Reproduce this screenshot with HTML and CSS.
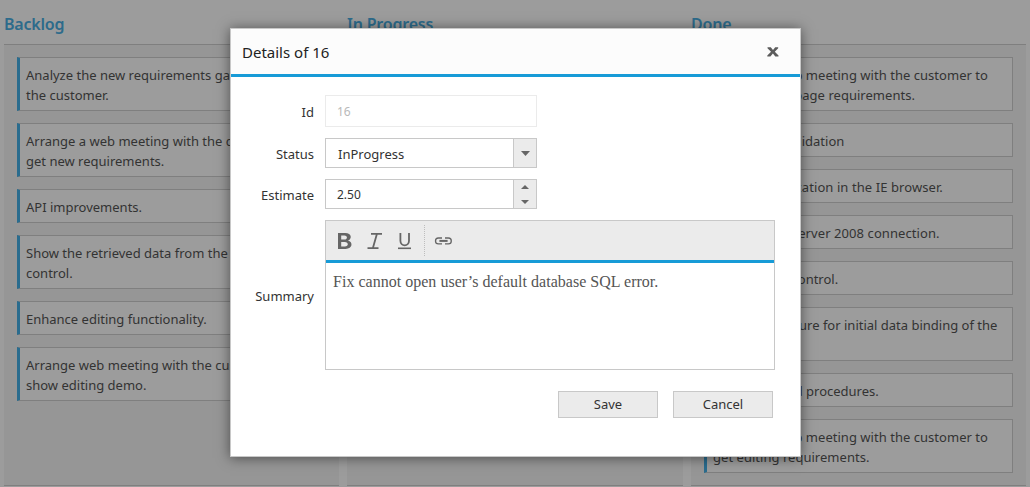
FILE: index.html
```html
<!DOCTYPE html>
<html lang="en">
<head>
<meta charset="utf-8">
<title>Kanban board</title>
<link rel="stylesheet" href="styles.css">
</head>
<body>
<main class="board">
  <section class="column">
    <h2 class="column-title">Backlog</h2>
    <div class="column-body">
      <div class="card">Analyze the new requirements gathered from<br>the customer.</div>
      <div class="card">Arrange a web meeting with the customer to<br>get new requirements.</div>
      <div class="card">API improvements.</div>
      <div class="card">Show the retrieved data from the server in grid<br>control.</div>
      <div class="card">Enhance editing functionality.</div>
      <div class="card">Arrange web meeting with the customer to<br>show editing demo.</div>
    </div>
  </section>
  <section class="column">
    <h2 class="column-title">In Progress</h2>
    <div class="column-body"></div>
  </section>
  <section class="column">
    <h2 class="column-title">Done</h2>
    <div class="column-body">
      <div class="card wide">Arrange a web meeting with the customer to<br>get the login page requirements.</div>
      <div class="card">Login page validation</div>
      <div class="card wider">Test the application in the IE browser.</div>
      <div class="card wider">Analyze SQL server 2008 connection.</div>
      <div class="card">Analyze grid control.</div>
      <div class="card">Stored procedure for initial data binding of the<br>grid.</div>
      <div class="card">Analyze stored procedures.</div>
      <div class="card wide">Arrange a web meeting with the customer to<br>get editing requirements.</div>
    </div>
  </section>
</main>

<div class="dialog" role="dialog">
  <header class="dialog-header">
    <span class="dialog-title">Details of 16</span>
    <svg class="close" width="12" height="10" viewBox="0 0 12 10"><path d="M0.5 0.3H3.8L6 3.1L8.2 0.3H11.2V1.2L7.8 4.7L11.5 8.5V9.5H8.3L5.9 6.6L3.4 9.5H0.3V8.5L4 4.7L0.5 1.2Z" fill="#5c5c5c"/></svg>
  </header>
  <div class="form">
    <label class="label">Id</label>
    <div class="field field-id"><span class="value">16</span></div>
    <label class="label">Status</label>
    <div class="field field-status"><span class="value">InProgress</span>
      <span class="side"><svg width="9" height="5" viewBox="0 0 9 5"><path d="M0 0H9L4.5 5Z" fill="#666"/></svg></span>
    </div>
    <label class="label">Estimate</label>
    <div class="field field-estimate"><span class="value">2.50</span>
      <span class="side spin"><svg width="8" height="4" viewBox="0 0 8 4"><path d="M0 4H8L4 0Z" fill="#666"/></svg><svg width="8" height="4" viewBox="0 0 8 4"><path d="M0 0H8L4 4Z" fill="#666"/></svg></span>
    </div>
    <label class="label">Summary</label>
    <div class="editor">
      <div class="toolbar">
        <svg class="tools" width="125" height="39" viewBox="0 0 125 39">
          <path d="M12 12H19.2C26 12 26.2 18.3 21.9 19.6C27.3 20.8 26.8 28 19.6 28H12ZM15.2 14.4V18.6H18.4C21.8 18.6 21.8 14.4 18.4 14.4ZM15.2 21V25.5H18.8C22.8 25.5 22.8 21 18.8 21Z" fill="#666" fill-rule="evenodd"/>
          <g fill="none" stroke="#666">
            <path d="M45 12.8H56M41.5 27.2H52.5M50.9 13L46.9 27" stroke-width="1.8"/>
            <path d="M74.4 12V19.8C74.4 25.8 83 25.8 83 19.8V12" stroke-width="1.8"/>
            <path d="M72 27.3H85" stroke-width="1.6"/>
            <path d="M98.5 4V36" stroke="#bdbdbd" stroke-dasharray="1 1"/>
            <path d="M116 17H112.4A2.9 2.9 0 0 0 112.4 22.8H116M119 17H122.4A2.9 2.9 0 0 1 122.4 22.8H119" stroke-width="1.3"/>
            <path d="M113.4 19.9H121.6" stroke-width="2"/>
          </g>
        </svg>
      </div>
      <div class="summary">Fix cannot open user’s default database SQL error.</div>
    </div>
  </div>
  <footer class="actions">
    <button class="btn">Save</button>
    <button class="btn">Cancel</button>
  </footer>
</div>
</body>
</html>
```

FILE: styles.css
```css
* { box-sizing: border-box; }
body {
  margin: 0;
  height: 487px;
  overflow: hidden;
  background: #9c9c9c;
  color: #333;
  font: 13px/20px "Noto Sans", "Open Sans", sans-serif;
  white-space: nowrap;
}
.board {
  display: grid;
  grid-template-columns: 335px 336px 335px;
  column-gap: 8px;
  padding-left: 4px;
}
.column-title {
  margin: 0;
  height: 44px;
  padding-top: 14px;
  color: #2d6b8b;
  font-size: 16px;
  font-weight: 600;
  line-height: 20px;
  letter-spacing: -0.2px;
}
.column-body {
  display: flex;
  flex-direction: column;
  gap: 12px;
  height: 442px;
  padding: 12px 13px;
  background: #969696;
  border-top: 1px solid #7f7f7f;
  border-bottom: 1px solid #7f7f7f;
}
.card {
  padding: 7px 0 5px 6px;
  background: #9c9c9c;
  border: 1px solid #7f7f7f;
  border-left: 3px solid #2a6c8e;
}
.wide { letter-spacing: 0.03px; }
.wider { letter-spacing: 0.08px; }
.dialog {
  position: absolute;
  left: 230px;
  top: 28px;
  width: 571px;
  height: 429px;
  background: #fff;
  border: 1px solid #c8c8c8;
  box-shadow: 0 1px 12px rgba(0, 0, 0, .5);
  color: #333;
}
.dialog-header {
  display: flex;
  justify-content: space-between;
  align-items: center;
  height: 48px;
  padding: 0 21px 0 11px;
  background: #fcfcfc;
  border-bottom: 3px solid #179bd7;
}
.dialog-title { font-size: 15px; color: #222; }
.form {
  display: grid;
  grid-template-columns: 83px 450px;
  grid-template-rows: 32px 30px 30px 150px;
  gap: 11px;
  padding: 18px 0 0;
  align-items: center;
}
.label { text-align: right; padding-top: 2px; }
.field {
  display: flex;
  align-items: center;
  justify-content: space-between;
  width: 212px;
  height: 100%;
  padding-left: 12px;
  border: 1px solid #c8c8c8;
}
.value { padding-top: 2px; }
.field-id { padding-left: 11px; border-color: #ebebeb; color: #b9b9b9; font-size: 12px; }
.field-estimate { padding-left: 11px; font-size: 12px; }
.side {
  display: flex;
  flex-direction: column;
  align-items: center;
  justify-content: center;
  width: 23px;
  height: 100%;
  background: #ebebeb;
  border-left: 1px solid #c8c8c8;
}
.spin { gap: 11px; }
.editor { height: 150px; border: 1px solid #c8c8c8; }
.toolbar { height: 42px; background: #ebebeb; border-bottom: 3px solid #179bd7; }
.tools { display: block; overflow: visible; }
.summary {
  padding: 9px 7px;
  color: #555;
  font: 16px/20px "Liberation Serif", serif;
  letter-spacing: 0.02px;
}
.actions {
  display: flex;
  justify-content: flex-end;
  gap: 15px;
  padding: 21px 27px 0 0;
}
.btn {
  width: 100px;
  height: 27px;
  padding: 0 0 2px;
  background: #ebebeb;
  border: 1px solid #c8c8c8;
  color: #333;
  font: inherit;
}
```
